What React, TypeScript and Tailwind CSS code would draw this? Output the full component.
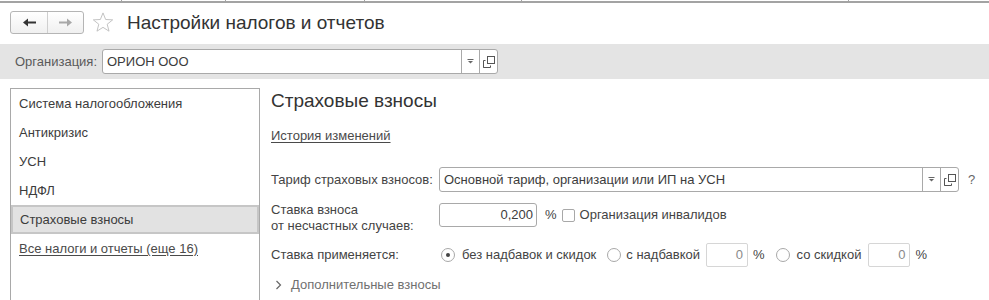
import React from "react";

const DropIcon = () => (
  <svg width="7" height="5" viewBox="0 0 7 5">
    <rect x="0.5" y="0" width="6" height="1" fill="#666" />
    <path d="M1 2 L6 2 L3.5 4.5 Z" fill="#666" />
  </svg>
);

const OpenIcon = () => (
  <svg width="12" height="12" viewBox="0 0 12 12" fill="none" stroke="#555" strokeWidth="1">
    <rect x="4.5" y="0.5" width="7" height="7" />
    <path d="M2.5 4.5 L0.5 4.5 L0.5 11.5 L2.5 11.5 M0.5 11.5 L7.5 11.5 L7.5 9.5" />
  </svg>
);

const Field = ({ width, text }: { width: number; text: string }) => (
  <div
    className="flex h-[25px] border border-[#a9a9a9] rounded-[3px] bg-white shrink-0"
    style={{ width }}
  >
    <div className="flex-1 flex items-center pl-[4px] text-[13px] text-[#3c3c3c] whitespace-nowrap overflow-hidden">
      {text}
    </div>
    <div className="w-[18px] border-l border-[#a9a9a9] flex items-center justify-center">
      <DropIcon />
    </div>
    <div className="w-[18px] border-l border-[#a9a9a9] flex items-center justify-center">
      <OpenIcon />
    </div>
  </div>
);

const Radio = ({ checked }: { checked?: boolean }) => (
  <div className="w-[14px] h-[14px] rounded-full border border-[#a8a8a8] bg-white flex items-center justify-center shrink-0">
    {checked && <div className="w-[4px] h-[4px] rounded-full bg-[#444]" />}
  </div>
);

const SmallNum = () => (
  <div className="w-[42px] h-[24px] border border-[#d6d6d6] rounded-[2px] bg-white flex items-center justify-end pr-[4px] text-[13px] text-[#8a8a8a]">
    0
  </div>
);

export default function App() {
  const items = ["Система налогообложения", "Антикризис", "УСН", "НДФЛ"];
  return (
    <div className="w-[989px] h-[300px] bg-white overflow-hidden font-['Liberation_Sans',Arial,sans-serif] text-[#3c3c3c]">
      {/* top strip */}
      <div className="flex h-[3px] border-b-2 border-[#a3a3a3]">
        <div className="w-[122px] border-r border-[#a3a3a3]" />
        <div className="w-[104px] border-r border-[#a3a3a3]" />
        <div className="w-[139px] border-r border-[#a3a3a3]" />
        <div className="w-[157px] border-r border-[#a3a3a3]" />
        <div className="w-[327px] border-r border-[#a3a3a3]" />
        <div className="flex-1" />
      </div>

      {/* header */}
      <div className="flex items-center h-[23px] mt-[8px] ml-[10px]">
        <div className="flex h-[23px] w-[74px] border border-[#b5b5b5] rounded-[3px] bg-gradient-to-b from-white to-[#f0f0f0]">
          <div className="w-[37px] border-r border-[#cfcfcf] flex items-center justify-center">
            <svg width="13" height="9" viewBox="0 0 13 9">
              <path d="M0 4.5 L5 0.5 L5 3.5 L13 3.5 L13 5.5 L5 5.5 L5 8.5 Z" fill="#333" />
            </svg>
          </div>
          <div className="flex-1 flex items-center justify-center">
            <svg width="13" height="9" viewBox="0 0 13 9">
              <path d="M13 4.5 L8 0.5 L8 3.5 L0 3.5 L0 5.5 L8 5.5 L8 8.5 Z" fill="#a8a8a8" />
            </svg>
          </div>
        </div>
        <svg width="22" height="21" viewBox="0 0 24 23" className="ml-[8px]">
          <path
            d="M12 1 L14.9 8.2 L22.6 8.6 L16.6 13.4 L18.6 21 L12 16.8 L5.4 21 L7.4 13.4 L1.4 8.6 L9.1 8.2 Z"
            fill="none"
            stroke="#bdbdbd"
            strokeWidth="1"
            strokeLinejoin="round"
          />
        </svg>
        <div className="ml-[13px] text-[19px] text-[#333] leading-none whitespace-nowrap">
          Настройки налогов и отчетов
        </div>
      </div>

      {/* org band */}
      <div className="mt-[10px] h-[35px] bg-[#e4e4e4] flex items-center pl-[15px]">
        <div className="w-[87px] text-[13px] text-[#5a5a5a]">Организация:</div>
        <Field width={396} text="ОРИОН ООО" />
      </div>

      {/* body */}
      <div className="flex mt-[9px]">
        <div className="ml-[10px] w-[250px] h-[215px] border border-b-0 border-[#a9a9a9] shrink-0">
          {items.map((t) => (
            <div key={t} className="h-[29px] flex items-center pl-[8px] text-[13px] text-[#3c3c3c]">
              {t}
            </div>
          ))}
          <div className="h-[29px] flex items-center pl-[7px] text-[13px] text-[#3c3c3c] bg-[#e2e2e2] border-2 border-[#c6c6c6]">
            Страховые взносы
          </div>
          <div className="h-[29px] flex items-center pl-[8px] text-[13px] text-[#4a4a4a] underline underline-offset-2">
            Все налоги и отчеты (еще 16)
          </div>
        </div>

        <div className="ml-[11px] flex flex-col">
          <div className="h-[26px] flex items-center text-[19px] text-[#333] whitespace-nowrap">
            Страховые взносы
          </div>
          <div className="mt-[10px] h-[24px] flex items-center text-[13px] text-[#4a4a4a] underline underline-offset-2">
            История изменений
          </div>

          <div className="mt-[19px] h-[25px] flex items-center">
            <div className="w-[168px] text-[13px] text-[#444] whitespace-nowrap">Тариф страховых взносов:</div>
            <Field width={520} text="Основной тариф, организации или ИП на УСН" />
            <div className="ml-[9px] text-[13px] text-[#666]">?</div>
          </div>

          <div className="mt-[10px] flex items-start">
            <div className="w-[168px] text-[13px] leading-[16px] text-[#444]">
              Ставка взноса
              <br />
              от несчастных случаев:
            </div>
            <div className="mt-[1px] w-[98px] h-[24px] border border-[#a9a9a9] rounded-[3px] bg-white flex items-center justify-end pr-[3px] text-[13px] text-[#3c3c3c]">
              0,200
            </div>
            <div className="mt-[1px] h-[24px] flex items-center ml-[8px] text-[13px] text-[#444]">%</div>
            <div className="mt-[1px] h-[24px] flex items-center ml-[5px]">
              <div className="w-[13px] h-[13px] border border-[#a8a8a8] rounded-[2px] bg-white" />
              <div className="ml-[5px] text-[13px] text-[#444] whitespace-nowrap">Организация инвалидов</div>
            </div>
          </div>

          <div className="mt-[9px] h-[24px] flex items-center text-[13px] text-[#444] whitespace-nowrap">
            <div className="w-[170px]">Ставка применяется:</div>
            <Radio checked />
            <div className="ml-[7px]">без надбавок и скидок</div>
            <div className="ml-[11px]"><Radio /></div>
            <div className="ml-[5px]">с надбавкой</div>
            <div className="ml-[6px]"><SmallNum /></div>
            <div className="ml-[5px]">%</div>
            <div className="ml-[11px]"><Radio /></div>
            <div className="ml-[7px]">со скидкой</div>
            <div className="ml-[7px]"><SmallNum /></div>
            <div className="ml-[5px]">%</div>
          </div>

          <div className="mt-[8px] h-[20px] flex items-center text-[13px] text-[#707070] whitespace-nowrap">
            <svg width="8" height="10" viewBox="0 0 8 10" className="ml-[4px]">
              <path d="M1.5 1 L5.5 5 L1.5 9" fill="none" stroke="#666" strokeWidth="1.2" />
            </svg>
            <div className="ml-[8px]">Дополнительные взносы</div>
          </div>
        </div>
      </div>
    </div>
  );
}
